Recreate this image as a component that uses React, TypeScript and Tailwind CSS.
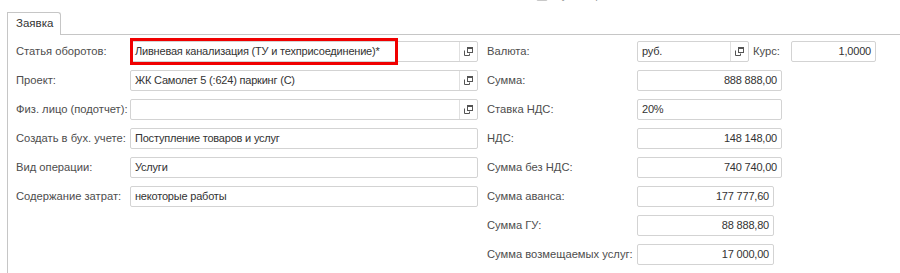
import React from 'react'

const font = { fontFamily: '"Liberation Sans", Arial, sans-serif' }

function OpenIcon() {
    return (
        <svg width="11" height="11" viewBox="0 0 11 11" className="text-[#555]">
            <rect x="4.5" y="1.5" width="5" height="5" fill="none" stroke="currentColor" strokeWidth="1" />
            <rect x="4.5" y="1.5" width="5" height="1.5" fill="currentColor" />
            <path d="M1.5 4.5 V9.5 H6.5 V7.5" fill="none" stroke="currentColor" strokeWidth="1" />
        </svg>
    )
}

function Field({ value, width, align = 'left', button = false, highlight = false }: { value?: string; width: number; align?: 'left' | 'right'; button?: boolean; highlight?: boolean }) {
    return (
        <div className="relative flex h-[21px] shrink-0 items-stretch rounded-[2px] border border-[#d3d3d3] bg-white" style={{ width }}>
            <div className={`flex flex-1 items-center overflow-hidden whitespace-nowrap px-[4px] text-[11px] tracking-[-0.2px] text-[#333] ${align === 'right' ? 'justify-end' : ''}`}>{value}</div>
            {button && (
                <div className="flex w-[18px] items-center justify-center border-l border-[#e0e0e0]">
                    <OpenIcon />
                </div>
            )}
            {highlight && <div className="pointer-events-none absolute left-[-1px] top-[-4px] h-[27px] w-[268px] border-[3px] border-[#f00000]" />}
        </div>
    )
}

function Row({ label, labelWidth, children }: { label: string; labelWidth: number; children: React.ReactNode }) {
    return (
        <div className="flex h-[29px] items-center">
            <div className="shrink-0 whitespace-nowrap text-[11.2px] text-[#4d4d4d]" style={{ width: labelWidth }}>{label}</div>
            {children}
        </div>
    )
}

export default function App() {
    return (
        <div className="h-[273px] w-[900px] overflow-hidden bg-white" style={font}>
            <div className="flex h-[12px] items-end pl-[536px]">
                <div className="mb-[9px] flex items-center gap-[6px]">
                    <div className="h-[12px] w-[12px] rounded-[2px] border border-[#c8c8c8] bg-white" />
                    <span className="text-[11px] text-[#999]">мультипроект</span>
                </div>
            </div>

            <div className="flex h-[23px] pl-[7px]">
                <div className="flex w-[54px] items-center rounded-tr-[3px] border-l border-r border-t border-[#c6c6c6] pl-[8px] text-[11.5px] text-[#333]">Заявка</div>
                <div className="flex-1 border-b border-[#c6c6c6]" />
            </div>

            <div className="ml-[7px] flex h-[240px] border-l border-[#c6c6c6] pt-[2px] pl-[8px]">
                <div className="flex w-[471px] flex-col">
                    <Row label="Статья оборотов:" labelWidth={114}>
                        <Field width={348} value="Ливневая канализация (ТУ и техприсоединение)*" button highlight />
                    </Row>
                    <Row label="Проект:" labelWidth={114}>
                        <Field width={348} value="ЖК Самолет 5 (:624) паркинг (С)" button />
                    </Row>
                    <Row label="Физ. лицо (подотчет):" labelWidth={114}>
                        <Field width={348} button />
                    </Row>
                    <Row label="Создать в бух. учете:" labelWidth={114}>
                        <Field width={348} value="Поступление товаров и услуг" />
                    </Row>
                    <Row label="Вид операции:" labelWidth={114}>
                        <Field width={348} value="Услуги" />
                    </Row>
                    <Row label="Содержание затрат:" labelWidth={114}>
                        <Field width={348} value="некоторые работы" />
                    </Row>
                </div>

                <div className="flex flex-col">
                    <Row label="Валюта:" labelWidth={150}>
                        <Field width={112} value="руб." button />
                        <span className="ml-[4px] w-[38px] text-[11.2px] text-[#4d4d4d]">Курс:</span>
                        <Field width={85} value="1,0000" align="right" />
                    </Row>
                    <Row label="Сумма:" labelWidth={150}>
                        <Field width={145} value="888 888,00" align="right" />
                    </Row>
                    <Row label="Ставка НДС:" labelWidth={150}>
                        <Field width={145} value="20%" />
                    </Row>
                    <Row label="НДС:" labelWidth={150}>
                        <Field width={145} value="148 148,00" align="right" />
                    </Row>
                    <Row label="Сумма без НДС:" labelWidth={150}>
                        <Field width={145} value="740 740,00" align="right" />
                    </Row>
                    <Row label="Сумма аванса:" labelWidth={150}>
                        <Field width={137} value="177 777,60" align="right" />
                    </Row>
                    <Row label="Сумма ГУ:" labelWidth={150}>
                        <Field width={137} value="88 888,80" align="right" />
                    </Row>
                    <Row label="Сумма возмещаемых услуг:" labelWidth={150}>
                        <Field width={137} value="17 000,00" align="right" />
                    </Row>
                </div>
            </div>
        </div>
    )
}
